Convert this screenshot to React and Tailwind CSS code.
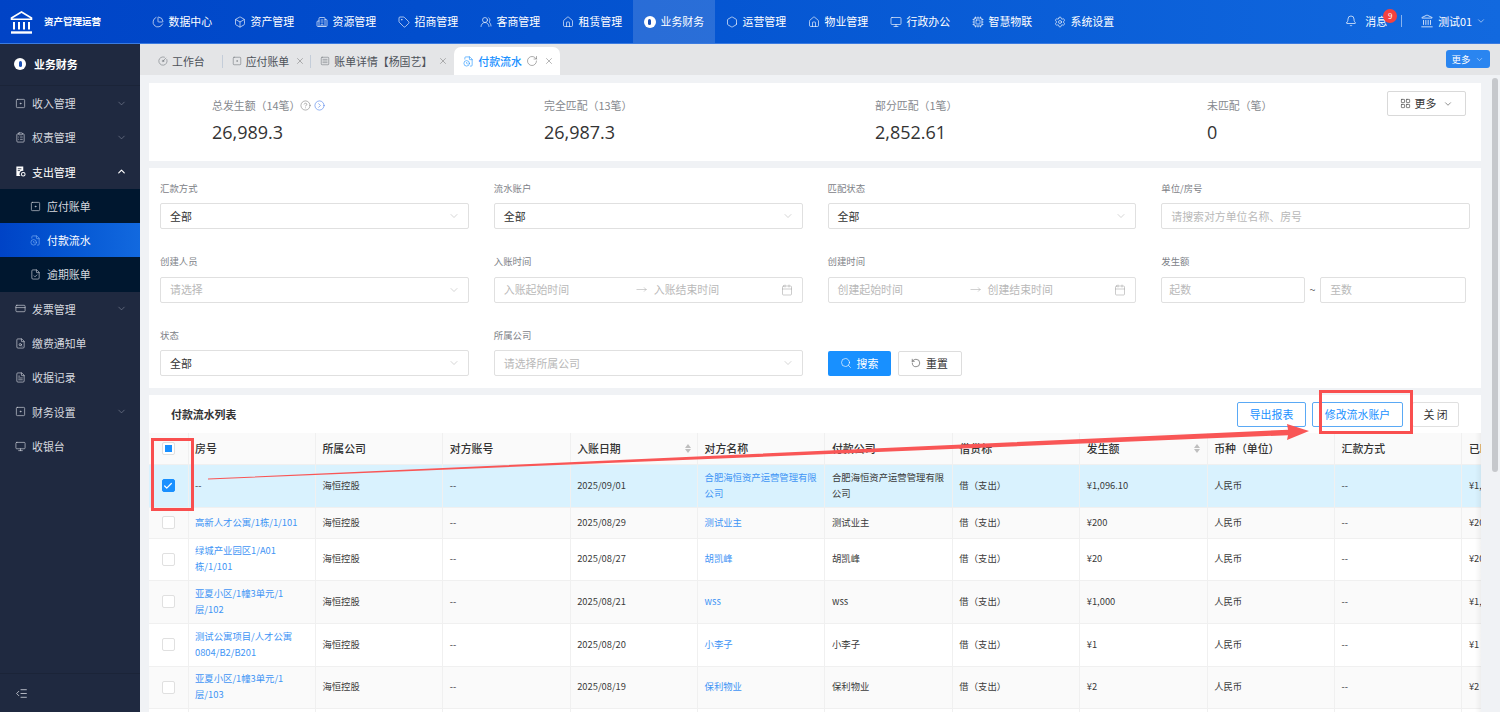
import React from "react";
import {
  Bell, Box, Building2, Calendar, Check, ChevronDown, ChevronUp, CircleChevronRight, CircleGauge, CircleHelp, ClipboardList,
  CreditCard, Cpu, FileCheck, FileClock, FileSearch, FileText, Hexagon, Home, IndentDecrease, Landmark, LayoutGrid, Monitor,
  MoveRight, PieChart, RotateCw, Search, Settings, SquareDot, SquareMenu, Tag, UsersRound, X,
} from "lucide-react";

const font = "font-['Noto_Sans_CJK_SC','Liberation_Sans',sans-serif]";

const navItems = [
  ["数据中心", PieChart],
  ["资产管理", Box],
  ["资源管理", Building2],
  ["招商管理", Tag],
  ["客商管理", UsersRound],
  ["租赁管理", Home],
  ["业务财务", null],
  ["运营管理", Hexagon],
  ["物业管理", Home],
  ["行政办公", Monitor],
  ["智慧物联", Cpu],
  ["系统设置", Settings],
];

const Dot = () => (
  <span className="flex h-[12px] w-[12px] shrink-0 items-center justify-center rounded-full bg-white">
    <span className="h-[6px] w-[3px] rounded-full bg-[#1a4fb5]" />
  </span>
);

const Header = () => (
  <div className="flex h-[44px] shrink-0 items-center border-b border-[#3b7be0] bg-gradient-to-r from-[#0043c6] to-[#1269df] text-white">
    <div className="flex w-[140.5px] shrink-0 items-center pl-[10px]">
      <svg width="23" height="24" viewBox="0 0 23 24" fill="none" stroke="white" strokeWidth="1.6">
        <path d="M1.5 8 11.5 2l10 6v1.2h-20z" />
        <path d="M4 12v7.5M9 12v7.5M14 12v7.5M19 12v7.5" strokeWidth="2" />
        <path d="M1 22.5h21" strokeWidth="2.4" />
      </svg>
      <span className="ml-[11px] text-[9.5px] font-bold">资产管理运营</span>
    </div>
    <div className="flex h-full">
      {navItems.map(([name, Icon]) => (
        <div
          key={name}
          className={`flex h-full w-[82px] items-center gap-[5px] pl-[11px] text-[10.9px] ${name === "业务财务" ? "bg-white/15" : ""}`}
        >
          {Icon ? <Icon size={12} strokeWidth={1.3} /> : <Dot />}
          <span>{name}</span>
        </div>
      ))}
    </div>
    <div className="ml-auto flex items-center pr-[14px] text-[10.9px]">
      <Bell size={12} strokeWidth={1.4} />
      <span className="relative ml-[8px]">
        消息
        <span className="absolute -right-[10px] -top-[4px] flex h-[14px] w-[14px] items-center justify-center rounded-full bg-[#f5413f] text-[8px]">
          9
        </span>
      </span>
      <span className="ml-[14px] h-[12px] w-px bg-white/50" />
      <Landmark size={14} strokeWidth={1.3} className="ml-[18px]" />
      <span className="ml-[4px]">测试01</span>
      <ChevronDown size={10} strokeWidth={1.3} className="ml-[4px]" />
    </div>
  </div>
);

// 支出管理 uses a filled icon in the reference
const FilledDoc = ({ size }) => (
  <svg width={size} height={size} viewBox="0 0 12 12" className="shrink-0">
    <path d="M1.5 0.5h7.5v5a3.2 3.2 0 0 0-3 5.5H1.5z" fill="white" />
    <path d="M3 3h4M3 5h2.5" stroke="#1f2940" strokeWidth="0.9" />
    <circle cx="9" cy="9" r="2" fill="none" stroke="white" strokeWidth="1.1" />
  </svg>
);

const sideItems = [
  { name: "收入管理", icon: SquareDot, arrow: "down" },
  { name: "权责管理", icon: ClipboardList, arrow: "down" },
  { name: "支出管理", icon: FilledDoc, arrow: "up", strong: true },
  { name: "应付账单", icon: SquareDot, sub: true },
  { name: "付款流水", icon: FileClock, sub: true, active: true },
  { name: "逾期账单", icon: FileCheck, sub: true },
  { name: "发票管理", icon: CreditCard, arrow: "down" },
  { name: "缴费通知单", icon: FileSearch },
  { name: "收据记录", icon: FileText },
  { name: "财务设置", icon: SquareDot, arrow: "down" },
  { name: "收银台", icon: Monitor },
];

const Sidebar = () => (
  <div className="flex w-[140px] shrink-0 flex-col bg-[#1f2940] text-[10.9px] text-[#d5d8df]">
    <div className="flex h-[42px] shrink-0 items-center gap-[8px] border-b border-[#1b2438] pb-[1px] pl-[14px] font-bold text-white">
      <Dot />
      业务财务
    </div>
    <div className="flex flex-col">
      {sideItems.map((item) => {
        const Icon = item.icon;
        return (
          <div
            key={item.name}
            className={`flex h-[34.3px] items-center ${item.sub ? "pl-[30px]" : "pl-[15px]"} ${
              item.active
                ? "bg-gradient-to-r from-[#0043c6] to-[#1269df] text-white"
                : item.sub
                  ? "bg-[#00172f]"
                  : ""
            } ${item.strong ? "text-white" : ""}`}
          >
            <Icon size={11} strokeWidth={1.4} className={`shrink-0 ${item.active ? "text-[#7fb0f5]" : ""}`} />
            <span className="ml-[6px]">{item.name}</span>
            {item.arrow === "down" && <ChevronDown size={11} strokeWidth={1.4} className="ml-auto mr-[13px] text-[#7d8496]" />}
            {item.arrow === "up" && <ChevronUp size={11} strokeWidth={2.6} className="ml-auto mr-[13px] text-white" />}
          </div>
        );
      })}
    </div>
    <div className="mt-auto flex h-[39px] shrink-0 items-center border-t border-[#1b2438] pl-[15px]">
      <IndentDecrease size={13} strokeWidth={1.5} />
    </div>
  </div>
);

const Tab = ({ icon: Icon, name, close = true }) => (
  <div className="flex h-full items-center text-[10.9px] text-[#4d5259]">
    <Icon size={10} strokeWidth={1.3} className="text-[#6b6f75]" />
    <span className="ml-[4px]">{name}</span>
    {close && <X size={10} strokeWidth={1.3} className="ml-[6px] text-[#777]" />}
  </div>
);

const TabBar = () => (
  <div className="flex h-[31px] shrink-0 items-end bg-[#e4e5e7] pl-[18px] pr-[10px]">
    <div className="flex h-[28px] items-center">
      <Tab icon={CircleGauge} name="工作台" close={false} />
      <span className="ml-[17px] mr-[9px] h-[13px] w-px bg-[#c4cdd9]" />
      <Tab icon={SquareDot} name="应付账单" />
      <span className="ml-[5px] mr-[9px] h-[13px] w-px bg-[#c4cdd9]" />
      <Tab icon={SquareMenu} name="账单详情【杨国艺】" />
    </div>
    <div className="ml-[6px] flex h-[28px] w-[106px] items-center rounded-t-[7px] bg-white pl-[9px] text-[10.9px] font-medium text-[#1890ff]">
      <FileClock size={11} strokeWidth={1.3} />
      <span className="ml-[4px]">付款流水</span>
      <RotateCw size={12} strokeWidth={1.2} className="ml-[4px] text-[#777]" />
      <X size={10} strokeWidth={1.3} className="ml-[6px] text-[#777]" />
    </div>
    <div className="mb-[7px] ml-auto flex h-[18px] w-[44px] items-center justify-center gap-[5px] rounded-[3px] bg-[#2a85f0] text-[9.4px] text-white">
      更多 <ChevronDown size={9} strokeWidth={1.2} />
    </div>
  </div>
);

const stats = [
  ["总发生额（14笔）", "26,989.3", true],
  ["完全匹配（13笔）", "26,987.3"],
  ["部分匹配（1笔）", "2,852.61"],
  ["未匹配（笔）", "0"],
];

const Stats = () => (
  <div className="flex h-[78px] shrink-0 bg-white pl-[63px] pr-[15px] pt-[15px]">
    <div className="grid w-[1175px] grid-cols-[332px_331px_332px_180px]">
      {stats.map(([label, value, help]) => (
        <div key={label}>
          <div className="flex h-[15px] items-center text-[10.9px] text-[#86898e]">
            {label}
            {help && (
              <>
                <CircleHelp size={11} strokeWidth={1.2} className="text-[#777]" />
                <CircleChevronRight size={11} strokeWidth={1.2} className="ml-[3px] text-[#3d74e8]" />
              </>
            )}
          </div>
          <div className="mt-[7px] text-[18px] leading-[25px] text-[#333] font-['Open_Sans','Liberation_Sans',sans-serif]">{value}</div>
        </div>
      ))}
    </div>
    <div className="ml-auto mt-[-7px] flex h-[25px] w-[79px] items-center justify-center gap-[4px] rounded-[2px] border border-[#d9d9d9] text-[10.9px] text-[#333]">
      <LayoutGrid size={11} strokeWidth={1.3} />
      更多
      <ChevronDown size={10} strokeWidth={1.3} className="ml-[3px]" />
    </div>
  </div>
);

const Select = ({ value, placeholder }) => (
  <div className="flex h-[26px] items-center justify-between rounded-[2px] border border-[#e0e0e0] bg-white pl-[9px] pr-[8px] text-[10.9px]">
    <span className={value ? "text-[#333]" : "text-[#b9b9b9]"}>{value || placeholder}</span>
    <ChevronDown size={12} strokeWidth={1} className="text-[#aaa]" />
  </div>
);

const Range = ({ from, to }) => (
  <div className="flex h-[26px] items-center rounded-[2px] border border-[#e0e0e0] bg-white px-[9px] text-[10.9px] text-[#b9b9b9]">
    <span className="w-[132px]">{from}</span>
    <MoveRight size={11} strokeWidth={1} className="text-[#999]" />
    <span className="ml-[7px]">{to}</span>
    <Calendar size={12} strokeWidth={1} className="ml-auto text-[#999]" />
  </div>
);

const Field = ({ label, children }) => (
  <div>
    <div className="mb-[8px] flex h-[14px] items-center text-[9.4px] text-[#7d8187]">{label}</div>
    {children}
  </div>
);

const Filters = () => (
  <div className="mt-[7px] h-[220px] shrink-0 bg-white px-[11px] pt-[13px]">
    <div className="grid grid-cols-4 gap-x-[25px] gap-y-[25.5px]">
      <Field label="汇款方式"><Select value="全部" /></Field>
      <Field label="流水账户"><Select value="全部" /></Field>
      <Field label="匹配状态"><Select value="全部" /></Field>
      <Field label="单位/房号">
        <div className="flex h-[26px] items-center rounded-[2px] border border-[#e0e0e0] pl-[9px] text-[10.9px] text-[#b9b9b9]">请搜索对方单位名称、房号</div>
      </Field>
      <Field label="创建人员"><Select placeholder="请选择" /></Field>
      <Field label="入账时间"><Range from="入账起始时间" to="入账结束时间" /></Field>
      <Field label="创建时间"><Range from="创建起始时间" to="创建结束时间" /></Field>
      <Field label="发生额">
        <div className="flex items-center pr-[4px] text-[10.9px] text-[#b9b9b9]">
          <div className="flex h-[26px] flex-1 items-center rounded-[2px] border border-[#e0e0e0] pl-[7px]">起数</div>
          <span className="w-[15px] text-center text-[#666]">~</span>
          <div className="flex h-[26px] flex-1 items-center rounded-[2px] border border-[#e0e0e0] pl-[9px]">至数</div>
        </div>
      </Field>
      <Field label="状态"><Select value="全部" /></Field>
      <Field label="所属公司"><Select placeholder="请选择所属公司" /></Field>
      <div className="col-span-2 flex items-end gap-[7px] pb-[0.5px]">
        <div className="flex h-[25px] w-[63px] items-center justify-center gap-[5px] rounded-[2px] bg-[#1890ff] text-[10.9px] text-white">
          <Search size={12} strokeWidth={1.3} />
          搜索
        </div>
        <div className="flex h-[25px] w-[64px] items-center justify-center gap-[5px] rounded-[2px] border border-[#ddd] text-[10.9px] text-[#333]">
          <RotateCw size={10} strokeWidth={1.3} className="-scale-x-100" />
          重置
        </div>
      </div>
    </div>
  </div>
);

const columns = [
  { name: "", w: "w-[39px]" },
  { name: "房号", w: "w-[127.4px]" },
  { name: "所属公司", w: "w-[127.4px]" },
  { name: "对方账号", w: "w-[127.4px]" },
  { name: "入账日期", w: "w-[127.4px]", sort: true },
  { name: "对方名称", w: "w-[127.4px]" },
  { name: "付款公司", w: "w-[127.4px]" },
  { name: "借贷标", w: "w-[127.4px]" },
  { name: "发生额", w: "w-[127.4px]", sort: true },
  { name: "币种（单位）", w: "w-[127.4px]" },
  { name: "汇款方式", w: "w-[127.4px]" },
  { name: "已匹配金额", w: "w-[127.4px]" },
];

const rows = [
  { h: "h-[43px]", room: "--", date: "2025/09/01", other: "合肥海恒资产运营管理有限公司", pay: "合肥海恒资产运营管理有限公司", amount: "¥1,096.10", selected: true },
  { h: "h-[31px]", room: "高新人才公寓/1栋/1/101", date: "2025/08/29", other: "测试业主", pay: "测试业主", amount: "¥200" },
  { h: "h-[42px]", room: "绿城产业园区1/A01栋/1/101", date: "2025/08/27", other: "胡凯峰", pay: "胡凯峰", amount: "¥20" },
  { h: "h-[43px]", room: "亚夏小区/1幢3单元/1层/102", date: "2025/08/21", other: "wss", pay: "wss", amount: "¥1,000" },
  { h: "h-[43px]", room: "测试公寓项目/人才公寓0804/B2/B201", date: "2025/08/20", other: "小李子", pay: "小李子", amount: "¥1" },
  { h: "h-[42px]", room: "亚夏小区/1幢3单元/1层/103", date: "2025/08/19", other: "保利物业", pay: "保利物业", amount: "¥2" },
  { h: "h-[42px]", room: "亚夏小区/1幢3单元/1层/104", date: "2025/08/18", other: "保利物业", pay: "保利物业", amount: "¥2" },
];

const Checkbox = ({ state }) => (
  <span
    className={`flex h-[13px] w-[13px] items-center justify-center rounded-[2px] border ${
      state === "checked" ? "border-[#1890ff] bg-[#1890ff]" : "border-[#e0e0e0] bg-white"
    }`}
  >
    {state === "checked" && <Check size={10} strokeWidth={3} className="text-white" />}
    {state === "mixed" && <span className="h-[7px] w-[7px] bg-[#1890ff]" />}
  </span>
);

const Sorter = () => (
  <span className="ml-auto flex flex-col gap-[1px]">
    <span className="h-0 w-0 border-x-[3px] border-b-[4px] border-x-transparent border-b-[#bfbfbf]" />
    <span className="h-0 w-0 border-x-[3px] border-t-[4px] border-x-transparent border-t-[#bfbfbf]" />
  </span>
);

const Cell = ({ link, children }) => (
  <td className={`border-b border-r border-[#f0f0f0] px-[6.5px] align-middle text-[9.35px] leading-[15.6px] ${link ? "text-[#3f95f5]" : "text-[#3a3a3a]"}`}>
    {children}
  </td>
);

const Table = () => (
  <div className="relative mt-[7px] flex-1 overflow-hidden bg-white">
    <div className="flex h-[38px] items-center justify-between px-[22px]">
      <span className="text-[10.9px] font-bold text-[#333]">付款流水列表</span>
      <div className="flex items-center text-[10.9px]">
        <div className="flex h-[25px] w-[69px] items-center justify-center rounded-[2px] border border-[#5aa9f5] text-[#1890ff]">导出报表</div>
        <div className="ml-[6px] flex h-[25px] w-[91px] items-center justify-center rounded-[2px] border border-[#5aa9f5] text-[#1890ff]">修改流水账户</div>
        <div className="ml-[9px] flex h-[25px] w-[47px] items-center justify-center rounded-[2px] border border-[#e0e0e0] text-[#333]">关 闭</div>
      </div>
    </div>
    <table className="w-[1440.4px] table-fixed border-collapse">
      <thead>
        <tr className="h-[31px] bg-[#fafafa]">
          {columns.map((c, i) => (
            <th key={i} className={`${c.w} border-b border-r border-[#f0f0f0] px-[6.5px] text-left text-[10.9px] font-medium text-[#333]`}>
              {i === 0 ? (
                <span className="flex justify-center"><Checkbox state="mixed" /></span>
              ) : (
                <span className="flex items-center whitespace-nowrap">{c.name}{c.sort && <Sorter />}</span>
              )}
            </th>
          ))}
        </tr>
      </thead>
      <tbody>
        {rows.map((r, i) => (
          <tr key={r.date} className={`${r.h} ${r.selected ? "bg-[#d9f2fe]" : i % 2 === 1 ? "bg-[#fafafa]" : "bg-white"}`}>
            <Cell><span className="flex justify-center"><Checkbox state={r.selected ? "checked" : "none"} /></span></Cell>
            <Cell link={r.room !== "--"}>{r.room}</Cell>
            <Cell>海恒控股</Cell>
            <Cell>--</Cell>
            <Cell>{r.date}</Cell>
            <Cell link>{r.other}</Cell>
            <Cell>{r.pay}</Cell>
            <Cell>借（支出）</Cell>
            <Cell>{r.amount}</Cell>
            <Cell>人民币</Cell>
            <Cell>--</Cell>
            <Cell>{r.amount}</Cell>
          </tr>
        ))}
      </tbody>
    </table>
    <div className="absolute bottom-0 right-0 top-[38px] w-[6px] bg-gradient-to-r from-transparent to-black/5" />
  </div>
);

// red marks drawn on top of the screenshot
const Annotations = () => (
  <svg className="pointer-events-none absolute left-0 top-0" width="1500" height="712" fill="none">
    <rect x="152.5" y="439.5" width="40" height="70" stroke="#f94f4f" strokeWidth="3" />
    <rect x="1320.5" y="391.5" width="91" height="41" stroke="#f94f4f" strokeWidth="3" />
    <path d="M208 478.6 1288 429.8 1287 424 1309 431 1287 440 1288 435.2 208 479.4z" fill="#f95656" />
  </svg>
);

export default function App() {
  return (
    <div className={`relative flex h-screen flex-col overflow-hidden bg-[#f0f2f5] ${font}`}>
      <Header />
      <div className="flex min-h-0 flex-1">
        <Sidebar />
        <div className="flex min-w-0 flex-1 flex-col">
          <TabBar />
          <div className="flex min-h-0 flex-1">
            <div className="flex min-w-0 flex-1 flex-col pl-[9px] pt-[8px]">
              <Stats />
              <Filters />
              <Table />
            </div>
            <div className="w-[19px] shrink-0 pl-[11px] pt-[3px]">
              <div className="h-[394px] w-[6px] rounded-[3px] bg-[#c6c8cc]" />
            </div>
          </div>
        </div>
      </div>
      <Annotations />
    </div>
  );
}
